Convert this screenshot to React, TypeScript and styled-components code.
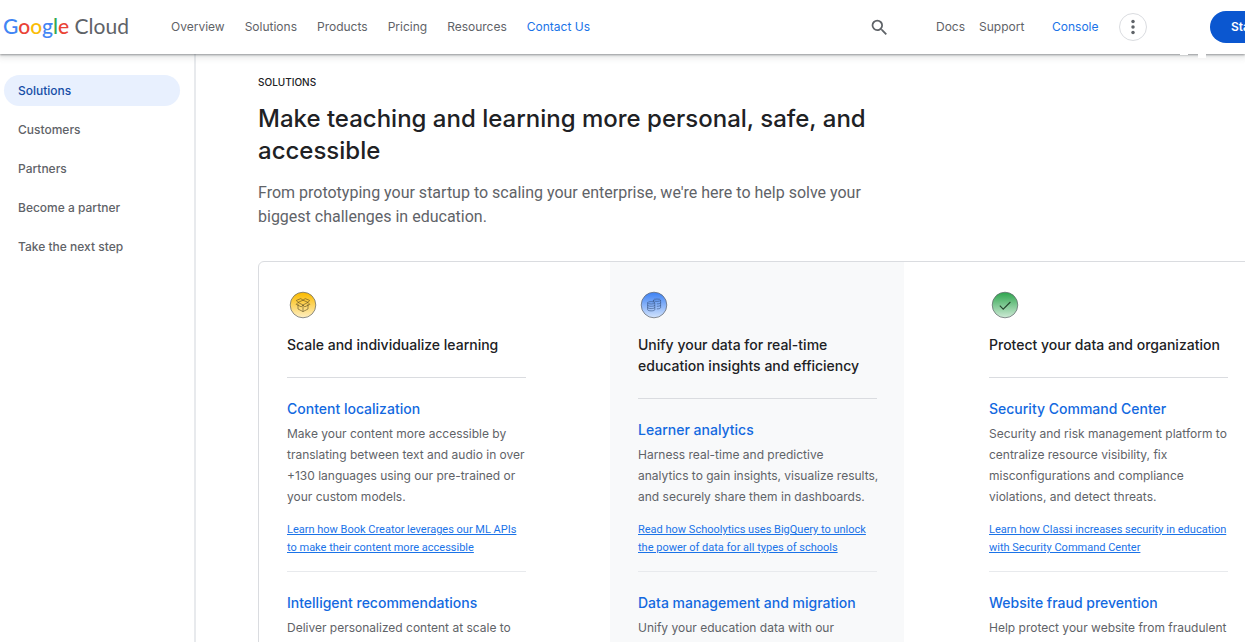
import React from "react";
import styled, { createGlobalStyle } from "styled-components";

const GlobalStyle = createGlobalStyle`
  *, *::before, *::after { box-sizing: border-box; }
  body {
    margin: 0;
    background: #fff;
    color: #5f6368;
    font-family: Inter, "Liberation Sans", sans-serif;
    overflow: hidden;
  }
  h1, h2, h3, p, ul { margin: 0; padding: 0; }
  ul { list-style: none; }
  a { color: inherit; text-decoration: none; }
`;

const Header = styled.header`
  position: relative;
  z-index: 1;
  display: flex;
  align-items: center;
  height: 54px;
  padding-left: 3px;
  background: #fff;
  box-shadow: 0 1px 2px rgba(60, 64, 67, 0.5), 0 2px 6px 2px rgba(60, 64, 67, 0.12);
`;

const Logo = styled.a`
  flex: none;
  width: 168px;
  padding-bottom: 3px;
  color: #5f6368;
  font-family: Lato, sans-serif;
  font-size: 21px;
  line-height: 28px;
  white-space: nowrap;
`;

const Letter = styled.span<{ $color: string }>`
  color: ${(p) => p.$color};
  font-weight: 500;
`;

const Nav = styled.nav`
  flex: 1 0 auto;
  display: flex;
  gap: 20px;
  min-width: 694px;
`;

const NavLink = styled.a<{ $accent?: boolean }>`
  color: ${(p) => (p.$accent ? "#1a73e8" : "#5f6368")};
  font-size: 12px;
  line-height: 18px;
  white-space: nowrap;
`;

const Tools = styled.div`
  flex: none;
  display: flex;
  align-items: center;
`;

const IconButton = styled.button<{ $ring?: boolean }>`
  display: grid;
  place-items: center;
  width: 28px;
  height: 28px;
  padding: 0;
  border: 1px solid ${(p) => (p.$ring ? "#dadce0" : "transparent")};
  border-radius: 50%;
  background: none;
`;

const ToolLinks = styled.div`
  display: flex;
  gap: 14px;
  width: 116px;
  margin-left: 43px;
`;

const ConsoleLink = styled(NavLink)`
  width: 67px;
`;

const StartButton = styled.button`
  height: 32px;
  margin-left: 63px;
  padding: 0 21px;
  border: 0;
  border-radius: 16px;
  background: #0b57d0;
  color: #fff;
  font: 600 12px/18px Inter, sans-serif;
  white-space: nowrap;
`;

const Notch = styled.span<{ $right: number; $height: number }>`
  position: absolute;
  top: 54px;
  right: ${(p) => p.$right}px;
  width: 8px;
  height: ${(p) => p.$height}px;
  background: #fff;
`;

const Page = styled.div`
  display: flex;
  height: calc(100vh - 54px);
`;

const Sidebar = styled.nav`
  flex: none;
  width: 196px;
  padding: 21px 14px 0 4px;
  border-right: 2px solid #e8eaed;
`;

const SideList = styled.ul`
  display: flex;
  flex-direction: column;
  gap: 8px;
`;

const SideLink = styled.a<{ $active?: boolean }>`
  display: block;
  padding: 7px 14px;
  border-radius: 16px;
  background: ${(p) => (p.$active ? "#e8f0fe" : "none")};
  color: ${(p) => (p.$active ? "#174ea6" : "#5f6368")};
  font-size: 12px;
  font-weight: 500;
  line-height: 17px;
`;

const Main = styled.main`
  flex: 1;
  min-width: 0;
  padding: 21px 0 0 62px;
  overflow: hidden;
`;

const Eyebrow = styled.p`
  color: #202124;
  font-size: 10px;
  font-weight: 500;
  line-height: 14px;
  text-transform: uppercase;
`;

const Title = styled.h1`
  max-width: 620px;
  margin-top: 14px;
  color: #202124;
  font-size: 24px;
  font-weight: 450;
  line-height: 32px;
`;

const Lead = styled.p`
  max-width: 630px;
  margin-top: 14px;
  font-family: Roboto, sans-serif;
  font-size: 16px;
  line-height: 24px;
`;

const Card = styled.div`
  display: grid;
  grid-template-columns: repeat(3, minmax(294px, 1fr));
  gap: 57px;
  min-width: 998px;
  margin-top: 32px;
  border: 1px solid #dadce0;
  border-radius: 6px;
`;

const Column = styled.section<{ $shaded?: boolean }>`
  padding: 27px 27px 40px 28px;
  background: ${(p) => (p.$shaded ? "#f8f9fa" : "none")};
`;

const Badge = styled.svg`
  display: block;
  width: 32px;
  height: 32px;
`;

const ColumnTitle = styled.h2`
  margin-top: 13px;
  padding-bottom: 22px;
  border-bottom: 1px solid #dadce0;
  color: #202124;
  font-size: 14px;
  font-weight: 450;
  line-height: 21px;
  white-space: pre;
`;

const Entry = styled.article`
  padding: 20px 0 14px;
  border-bottom: 1px solid #e8eaed;
`;

const EntryTitle = styled.h3`
  color: #1369e0;
  font-size: 14px;
  font-weight: 450;
  line-height: 21px;
`;

const EntryText = styled.p`
  margin-top: 4px;
  font-size: 12px;
  line-height: 21px;
  white-space: pre;
`;

const EntryLink = styled.a`
  display: block;
  margin-top: 14px;
  color: #1a73e8;
  font-family: Roboto, sans-serif;
  font-size: 11px;
  line-height: 18px;
  text-decoration: underline;
  white-space: pre;
`;

type BadgeKind = "box" | "data" | "check";

const badgeColors: Record<BadgeKind, [string, string]> = {
  box: ["#fbbc04", "#feefc3"],
  data: ["#4285f4", "#d2e3fc"],
  check: ["#34a853", "#ceead6"],
};

function ColumnBadge({ kind }: { kind: BadgeKind }) {
  const [top, bottom] = badgeColors[kind];
  return (
    <Badge viewBox="0 0 32 32" fill="none" aria-hidden="true">
      <defs>
        <linearGradient id={kind} x1="0" y1="0" x2="0" y2="1">
          <stop offset="0.05" stopColor={top} />
          <stop offset="1" stopColor={bottom} />
        </linearGradient>
      </defs>
      <circle cx="16" cy="16" r="12.8" fill={`url(#${kind})`} stroke="#5f6368" strokeWidth="0.7" />
      {kind === "box" && (
        <path
          d="M11 15v5l5 2.6 5-2.6v-5M16 16v6.6M16 16l-5-2.6-1.8 2 5 2.4L16 16l1.8 1.8 5-2.4-1.8-2L16 16M11 13.4l-1.6-2 4.4-1.8 2.2 1.6 2.2-1.6 4.4 1.8-1.6 2M11 13.4l5-2.2 5 2.2"
          stroke="#594a24"
          strokeWidth="0.6"
          strokeLinejoin="round"
        />
      )}
      {kind === "data" && (
        <g stroke="#34507e" strokeWidth="0.6">
          <ellipse cx="19" cy="11.2" rx="3.6" ry="1.2" />
          <path d="M15.4 11.2v2M22.6 11.2v7.4c0 .8-1.6 1.3-3.8 1.3M22.6 13.6c0 .8-1.6 1.3-3.8 1.3M22.6 16c0 .8-1.6 1.3-3.8 1.3" />
          <ellipse cx="13.2" cy="13.8" rx="3.6" ry="1.2" />
          <path d="M9.6 13.8v6.8c0 1.7 7.2 1.7 7.2 0v-6.8M9.6 16c0 1.7 7.2 1.7 7.2 0M9.6 18.3c0 1.7 7.2 1.7 7.2 0" />
        </g>
      )}
      {kind === "check" && <path d="M10.8 16.6l3.4 3.6 7.2-7.2" stroke="#24452d" strokeWidth="1.1" />}
    </Badge>
  );
}

const navItems = ["Overview", "Solutions", "Products", "Pricing", "Resources", "Contact Us"];
const sideItems = ["Solutions", "Customers", "Partners", "Become a partner", "Take the next step"];
const logoLetters = [
  ["G", "#4285f4"],
  ["o", "#ea4335"],
  ["o", "#fbbc04"],
  ["g", "#4285f4"],
  ["l", "#34a853"],
  ["e", "#ea4335"],
];

const columns: {
  kind: BadgeKind;
  title: string;
  entries: { title: string; text: string; link?: string }[];
}[] = [
  {
    kind: "box",
    title: "Scale and individualize learning",
    entries: [
      {
        title: "Content localization",
        text: "Make your content more accessible by\ntranslating between text and audio in over\n+130 languages using our pre-trained or\nyour custom models.",
        link: "Learn how Book Creator leverages our ML APIs\nto make their content more accessible",
      },
      { title: "Intelligent recommendations", text: "Deliver personalized content at scale to" },
    ],
  },
  {
    kind: "data",
    title: "Unify your data for real-time\neducation insights and efficiency",
    entries: [
      {
        title: "Learner analytics",
        text: "Harness real-time and predictive\nanalytics to gain insights, visualize results,\nand securely share them in dashboards.",
        link: "Read how Schoolytics uses BigQuery to unlock\nthe power of data for all types of schools",
      },
      { title: "Data management and migration", text: "Unify your education data with our" },
    ],
  },
  {
    kind: "check",
    title: "Protect your data and organization",
    entries: [
      {
        title: "Security Command Center",
        text: "Security and risk management platform to\ncentralize resource visibility, fix\nmisconfigurations and compliance\nviolations, and detect threats.",
        link: "Learn how Classi increases security in education\nwith Security Command Center",
      },
      { title: "Website fraud prevention", text: "Help protect your website from fraudulent" },
    ],
  },
];

export default function App() {
  return (
    <>
      <GlobalStyle />
      <Header>
        <Logo href="#">
          {logoLetters.map(([letter, color], i) => (
            <Letter key={i} $color={color}>{letter}</Letter>
          ))}{" "}
          Cloud
        </Logo>
        <Nav>
          {navItems.map((item) => (
            <NavLink key={item} href="#" $accent={item === "Contact Us"}>{item}</NavLink>
          ))}
        </Nav>
        <Tools>
          <IconButton aria-label="Search">
            <svg width="21" height="21" viewBox="0 0 24 24" fill="#5f6368">
              <path d="M15.5 14h-.79l-.28-.27A6.47 6.47 0 0 0 16 9.5 6.5 6.5 0 1 0 9.5 16c1.61 0 3.09-.59 4.23-1.57l.27.28v.79l5 4.99L20.49 19l-4.99-5zm-6 0C7.01 14 5 11.99 5 9.5S7.01 5 9.5 5 14 7.01 14 9.5 11.99 14 9.5 14z" />
            </svg>
          </IconButton>
          <ToolLinks>
            <NavLink href="#">Docs</NavLink>
            <NavLink href="#">Support</NavLink>
          </ToolLinks>
          <ConsoleLink href="#" $accent>Console</ConsoleLink>
          <IconButton $ring aria-label="More options">
            <svg width="20" height="20" viewBox="0 0 24 24" fill="#5f6368">
              <circle cx="12" cy="5.5" r="2.1" />
              <circle cx="12" cy="12" r="2.1" />
              <circle cx="12" cy="18.5" r="2.1" />
            </svg>
          </IconButton>
          <StartButton>Start free</StartButton>
        </Tools>
        <Notch $right={57} $height={1} />
        <Notch $right={39} $height={4} />
      </Header>
      <Page>
        <Sidebar>
          <SideList>
            {sideItems.map((item, i) => (
              <li key={item}>
                <SideLink href="#" $active={i === 0}>{item}</SideLink>
              </li>
            ))}
          </SideList>
        </Sidebar>
        <Main>
          <Eyebrow>Solutions</Eyebrow>
          <Title>Make teaching and learning more personal, safe, and accessible</Title>
          <Lead>
            From prototyping your startup to scaling your enterprise, we're here to help solve your
            biggest challenges in education.
          </Lead>
          <Card>
            {columns.map((column) => (
              <Column key={column.kind} $shaded={column.kind === "data"}>
                <ColumnBadge kind={column.kind} />
                <ColumnTitle>{column.title}</ColumnTitle>
                {column.entries.map((entry) => (
                  <Entry key={entry.title}>
                    <EntryTitle>{entry.title}</EntryTitle>
                    <EntryText>{entry.text}</EntryText>
                    {entry.link && <EntryLink href="#">{entry.link}</EntryLink>}
                  </Entry>
                ))}
              </Column>
            ))}
          </Card>
        </Main>
      </Page>
    </>
  );
}
